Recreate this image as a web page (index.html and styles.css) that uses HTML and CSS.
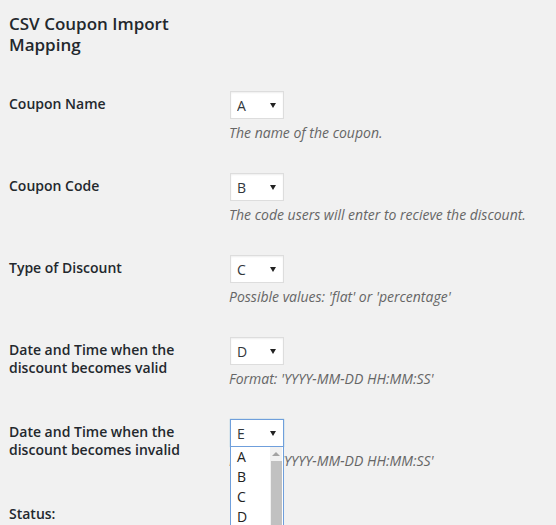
FILE: index.html
```html
<!DOCTYPE html>
<html lang="en">
<head>
<meta charset="utf-8">
<title>CSV Coupon Import Mapping</title>
<link rel="stylesheet" href="styles.css">
</head>
<body>
<div class="wrap">
  <h2 class="title">CSV Coupon Import Mapping</h2>
  <table class="form-table">
    <tbody>
      <tr>
        <th>Coupon Name</th>
        <td>
          <span class="sel"><select><option>A</option></select></span>
          <p class="description">The name of the coupon.</p>
        </td>
      </tr>
      <tr>
        <th>Coupon Code</th>
        <td>
          <span class="sel"><select><option>B</option></select></span>
          <p class="description">The code users will enter to recieve the discount.</p>
        </td>
      </tr>
      <tr>
        <th>Type of Discount</th>
        <td>
          <span class="sel"><select><option>C</option></select></span>
          <p class="description">Possible values: 'flat' or 'percentage'</p>
        </td>
      </tr>
      <tr>
        <th>Date and Time when the discount becomes valid</th>
        <td>
          <span class="sel"><select><option>D</option></select></span>
          <p class="description">Format: 'YYYY-MM-DD HH:MM:SS'</p>
        </td>
      </tr>
      <tr>
        <th>Date and Time when the discount becomes invalid</th>
        <td>
          <span class="sel open"><select class="focused"><option>E</option></select>
            <span class="popup">
              <span class="opt">A</span>
              <span class="opt">B</span>
              <span class="opt">C</span>
              <span class="opt">D</span>
              <span class="opt">E</span>
              <span class="scrollbar"><span class="arrow-up"></span><span class="thumb"></span></span>
            </span>
          </span>
          <p class="description">Format: 'YYYY-MM-DD HH:MM:SS'</p>
        </td>
      </tr>
      <tr>
        <th>Status:</th>
        <td>
          <span class="sel"><select><option>F</option></select></span>
          <p class="description">Possible values</p>
        </td>
      </tr>
    </tbody>
  </table>
</div>
</body>
</html>
```

FILE: styles.css
```css
html, body {
  margin: 0;
  padding: 0;
  background: #f1f1f1;
  overflow: hidden;
}

body {
  font-family: "Open Sans", "Noto Sans", sans-serif;
  color: #23282d;
  font-size: 13px;
}

.wrap {
  padding: 0 9px;
}

.title {
  width: 200px;
  margin: 13px 0 20px;
  font-size: 17px;
  line-height: 21px;
  font-weight: 600;
  color: #23282d;
}

.form-table {
  border-collapse: collapse;
  border-spacing: 0;
}

.form-table th {
  width: 200px;
  padding: 20px 10px 20px 0;
  text-align: left;
  vertical-align: top;
  font-size: 14px;
  line-height: 1.3;
  font-weight: 600;
  color: #23282d;
}

.form-table td {
  padding: 15px 10px;
  vertical-align: top;
  font-size: 14px;
  line-height: 1.3;
}

.sel {
  position: relative;
  display: inline-block;
  margin: 1px 0 1px 1px;
  vertical-align: top;
}

.sel::after {
  content: "";
  position: absolute;
  right: 8px;
  top: 12px;
  border-left: 3px solid transparent;
  border-right: 3px solid transparent;
  border-top: 5px solid #222;
  pointer-events: none;
}

.sel select {
  -webkit-appearance: none;
  appearance: none;
  display: block;
  width: 54px;
  height: 28px;
  margin: 0;
  padding: 0 6px;
  border: 1px solid #ddd;
  border-radius: 0;
  background: #fff;
  box-shadow: inset 0 1px 2px rgba(0, 0, 0, 0.07);
  font-family: "Open Sans", "Noto Sans", sans-serif;
  font-size: 14px;
  color: #32373c;
  outline: none;
}

.sel select.focused {
  border-color: #6f9fdc;
  box-shadow: 0 0 1px rgba(30, 140, 190, 0.6);
}

.description {
  display: block;
  margin: 4px 0 0;
  font-size: 14px;
  line-height: 18px;
  font-style: italic;
  color: #666;
}

.popup {
  position: absolute;
  left: 0;
  top: 27px;
  width: 52px;
  height: 100px;
  background: #fff;
  border: 1px solid #6f9fdc;
  z-index: 5;
  overflow: hidden;
}

.opt {
  display: block;
  height: 20px;
  line-height: 20px;
  padding-left: 6px;
  font-size: 14px;
  color: #222;
}

.scrollbar {
  position: absolute;
  right: 1px;
  top: 0;
  bottom: 0;
  width: 12px;
  background: #f1f1f1;
}

.arrow-up {
  position: absolute;
  left: 2px;
  top: 5px;
  border-left: 4px solid transparent;
  border-right: 4px solid transparent;
  border-bottom: 4px solid #a3a3a3;
}

.thumb {
  position: absolute;
  left: 1px;
  right: 0;
  top: 14px;
  bottom: 0;
  background: #c1c1c1;
}
```
